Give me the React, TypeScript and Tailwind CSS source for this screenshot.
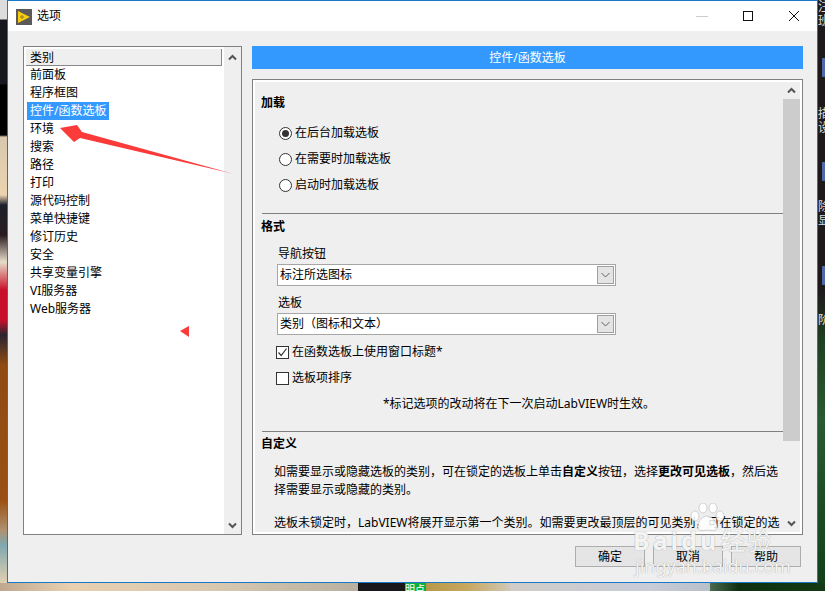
const categories = ['前面板', '程序框图', '控件/函数选板', '环境', '搜索', '路径', '打印', '源代码控制', '菜单快捷键', '修订历史', '安全', '共享变量引擎', 'VI服务器', 'Web服务器'];

function Chevron({ down }: { down?: boolean }) {
  return (
    <svg width="9" height="7" viewBox="0 0 9 7" className="block">
      <path d={down ? 'M1 1.5 L4.5 5 L8 1.5' : 'M1 5.5 L4.5 2 L8 5.5'} fill="none" stroke="#555555" strokeWidth="2" />
    </svg>
  );
}

function Radio({ label, checked }: { label: string; checked?: boolean }) {
  return (
    <div className="flex items-center gap-[3px] h-[18px] ml-[24px]">
      <div className="w-[13px] h-[13px] rounded-full border border-[#333333] bg-white flex items-center justify-center">
        {checked && <div className="w-[7px] h-[7px] rounded-full bg-[#333333]" />}
      </div>
      <span>{label}</span>
    </div>
  );
}

function Select({ value }: { value: string }) {
  return (
    <div className="w-[339px] h-[22px] ml-[22px] mt-px border border-[#a6a6a6] bg-white flex items-center justify-between pl-[2px] pr-px">
      <span>{value}</span>
      <div className="w-[17px] h-[18px] bg-[#e4e4e4] border border-[#a0a0a0] flex items-center justify-center">
        <svg width="9" height="6" viewBox="0 0 9 6">
          <path d="M0.5 1 L4.5 5 L8.5 1" fill="none" stroke="#606060" strokeWidth="1" />
        </svg>
      </div>
    </div>
  );
}

function Check({ label, checked }: { label: string; checked?: boolean }) {
  return (
    <div className="flex items-center gap-[3px] h-[18px] ml-[21px] mt-[8px]">
      <div className="w-[13px] h-[13px] border border-[#333333] bg-white flex items-center justify-center">
        {checked && (
          <svg width="11" height="11" viewBox="0 0 11 11">
            <path d="M1.5 5.5 L4.2 8.5 L9.5 1.5" fill="none" stroke="#333333" strokeWidth="1.2" />
          </svg>
        )}
      </div>
      <span>{label}</span>
    </div>
  );
}

function Button({ label }: { label: string }) {
  return (
    <div className="w-[70px] h-[21px] border border-[#adadad] bg-[#e5e5e5] flex items-center justify-center">{label}</div>
  );
}

export default function App() {
  return (
    <div className="relative w-[825px] h-[591px] overflow-hidden flex flex-col text-[12px] leading-[18px] text-black font-['Noto_Sans','Noto_Sans_CJK_SC',sans-serif]">
      <div className="flex h-[583px]">
        {/* desktop behind the dialog */}
        <div className="w-[7px] bg-[linear-gradient(180deg,#dddddd_0px,#dddddd_19px,#16181d_20px,#16181d_84px,#000000_85px,#000000_135px,#d8c8ae_137px,#ecd3ae_195px,#1c1f2a_205px,#2a1a20_235px,#e6dcc8_262px,#c8102a_290px,#c8102a_320px,#2a2430_335px,#8f4a12_365px,#9a5014_500px,#b09070_530px,#7fa8b0_545px,#e0d0b0_583px)]" />

        <div className="w-[811px] flex flex-col bg-[#efefef] border-x border-b border-t border-[#1a78c8]">
          <div className="h-[30px] bg-white flex items-center pl-[8px] relative">
            <svg width="16" height="16" viewBox="0 0 16 16" className="mt-px">
              <rect width="16" height="16" fill="#5a5a5a" />
              <path d="M2 2 L14 8 L2 14 Z" fill="#f8cc10" />
              <path d="M4 8 H8 M6 6 V10" stroke="#8a7a30" strokeWidth="1" />
            </svg>
            <span className="ml-[5px]">选项</span>
            <div className="ml-auto flex items-center">
              <div className="w-[12px] h-px bg-[#cccccc] mr-[35px]" />
              <div className="w-[10px] h-[10px] border border-[#111111] mr-[36px]" />
              <svg width="10" height="10" viewBox="0 0 10 10" className="mr-[18px]">
                <path d="M0 0 L10 10 M10 0 L0 10" stroke="#111111" strokeWidth="1" />
              </svg>
            </div>
          </div>

          <div className="flex-1 pl-[15px] pt-[15px] flex gap-[10px]">
            {/* category list */}
            <div className="w-[219px] h-[489px] border border-[#808080] flex">
              <div className="w-[200px] bg-white">
                <div className="w-[196px] h-[17px] ml-[2px] mt-[2px] bg-[#efefef] border-b border-r border-[#888888] pl-[4px] leading-[17px]">类别</div>
                <div className="flex flex-col">
                  {categories.map((c, i) => (
                    <div key={c} className={i === 2 ? 'w-fit h-[18px] ml-[3px] px-[3px] bg-[#3399ff] text-white' : 'h-[18px] pl-[6px]'}>{c}</div>
                  ))}
                </div>
              </div>
              <div className="w-[17px] bg-[#efefef] flex flex-col items-center justify-between pt-[7px] pb-[5px]">
                <Chevron />
                <Chevron down />
              </div>
            </div>

            <div className="w-[551px] flex flex-col">
              <div className="h-[23px] bg-[#3399ff] text-white flex items-center justify-center">控件/函数选板</div>

              <div className="h-[456px] mt-[10px] border border-[#808080] bg-white p-[2px] flex">
                <div className="w-[528px] bg-[#efefef] overflow-hidden">
                  <div className="font-bold ml-[6px] mt-[12px]">加载</div>
                  <div className="mt-[12px] flex flex-col gap-[8px]">
                    <Radio label="在后台加载选板" checked />
                    <Radio label="在需要时加载选板" />
                    <Radio label="启动时加载选板" />
                  </div>
                  <div className="h-px bg-[#808080] ml-[7px] mt-[19px]" />
                  <div className="font-bold ml-[6px] mt-[4px]">格式</div>
                  <div className="ml-[23px] mt-[9px]">导航按钮</div>
                  <Select value="标注所选图标" />
                  <div className="ml-[23px] mt-[8px]">选板</div>
                  <Select value="类别（图标和文本）" />
                  <Check label="在函数选板上使用窗口标题*" checked />
                  <Check label="选板项排序" />
                  <div className="text-center mt-[8px]">*标记选项的改动将在下一次启动LabVIEW时生效。</div>
                  <div className="h-px bg-[#808080] ml-[7px] mt-[18px]" />
                  <div className="font-bold ml-[6px] mt-[3px]">自定义</div>
                  <div className="w-[510px] ml-[19px] mt-[10px]">
                    如需要显示或隐藏选板的类别，可在锁定的选板上单击<b>自定义</b>按钮，选择<b>更改可见选板</b>，然后选择需要显示或隐藏的类别。
                  </div>
                  <div className="w-[510px] ml-[19px] mt-[15px]">
                    选板未锁定时，LabVIEW将展开显示第一个类别。如需要更改最顶层的可见类别，可在锁定的选板上拖动类别。
                  </div>
                </div>
                <div className="w-[17px] bg-[#efefef] flex flex-col">
                  <div className="h-[17px] flex items-center justify-center"><Chevron /></div>
                  <div className="h-[342px] bg-[#cccccc]" />
                  <div className="flex-1 flex items-end justify-center pb-[5px]"><Chevron down /></div>
                </div>
              </div>

              <div className="mt-[11px] flex justify-end gap-[8px] pr-[2px]">
                <Button label="确定" />
                <Button label="取消" />
                <Button label="帮助" />
              </div>
            </div>
          </div>
        </div>

        <div className="w-[7px] flex flex-col overflow-hidden bg-[linear-gradient(180deg,#1e1a1c_0px,#1e1a1c_290px,#1f3f22_340px,#2a5a30_420px,#12401a_583px)] text-[#dddddd] leading-[14px]">
          <span className="whitespace-nowrap">注</span>
          <span className="whitespace-nowrap">班</span>
          <div className="shrink-0 w-[3px] h-[19px] ml-[4px] mt-[30px] bg-[#5068a8]" />
          <span className="whitespace-nowrap mt-[30px]">描</span>
          <span className="whitespace-nowrap">设</span>
          <div className="shrink-0 w-[3px] h-[19px] ml-[4px] mt-[27px] bg-[#5068a8]" />
          <span className="whitespace-nowrap mt-[19px]">除</span>
          <span className="whitespace-nowrap">显</span>
          <div className="shrink-0 w-[3px] h-[19px] ml-[4px] mt-[38px] bg-[#5068a8]" />
          <span className="whitespace-nowrap mt-[28px]">阶</span>
        </div>
      </div>

      <div className="h-[8px] flex">
        <div className="w-[358px] bg-[linear-gradient(90deg,#c0a890,#e8d0b0_20%,#d8c8b0_60%,#b8b0a0)]" />
        <div className="w-[47px] bg-[#17171c]" />
        <div className="w-[21px] bg-[#08b040] text-white text-[10px] leading-[12px] overflow-hidden">明点</div>
        <div className="w-[84px] bg-[linear-gradient(90deg,#b89848,#c8a860_50%,#d0c8b8)]" />
        <div className="w-[200px] bg-[linear-gradient(90deg,#d0ccc8,#c8ccd8_70%,#b8c0c8)]" />
        <div className="flex-1 bg-[linear-gradient(90deg,#4a6a50,#0e3010_25%,#123a14)]" />
      </div>

      {/* annotations drawn over the screenshot */}
      <svg width="825" height="591" viewBox="0 0 825 591" className="absolute inset-0 pointer-events-none">
        <path d="M60 128 L77 125 L82 132 L232 173.5 L80 138 L74 142 Z" fill="#fb3a3a" />
        <path d="M180 331 L189 326 L189 337 Z" fill="#fb3a3a" />
      </svg>

      {/* baidu watermark */}
      <div className="absolute left-[633px] top-[503px] w-[150px] h-[72px] pointer-events-none text-white/90 [text-shadow:0_0_1px_#8a8a8a]">
        <svg width="34" height="30" viewBox="0 0 34 30" className="absolute left-[57px] top-0">
          <g fill="#ffffff" fillOpacity="0.85" stroke="#a8a8a8" strokeWidth="0.5">
            <ellipse cx="5" cy="13" rx="4" ry="5" />
            <ellipse cx="13" cy="5" rx="4" ry="5" />
            <ellipse cx="23" cy="5" rx="4" ry="5" />
            <ellipse cx="30" cy="13" rx="4" ry="5" />
            <path d="M17 13 C11 13 7 21 8 25 C10 29 14 27 17 27 C20 27 25 29 27 25 C28 21 23 13 17 13 Z" />
          </g>
        </svg>
        <div className="absolute left-0 top-[23px] whitespace-nowrap font-bold text-[25px] leading-[28px] tracking-[3px]">Baidu<span className="ml-px text-[25px] tracking-[1px] font-normal">经验</span></div>
        <div className="absolute left-[2px] top-[53px] whitespace-nowrap text-[18px] leading-[20px]">jingyan.baidu.com</div>
      </div>
    </div>
  );
}
